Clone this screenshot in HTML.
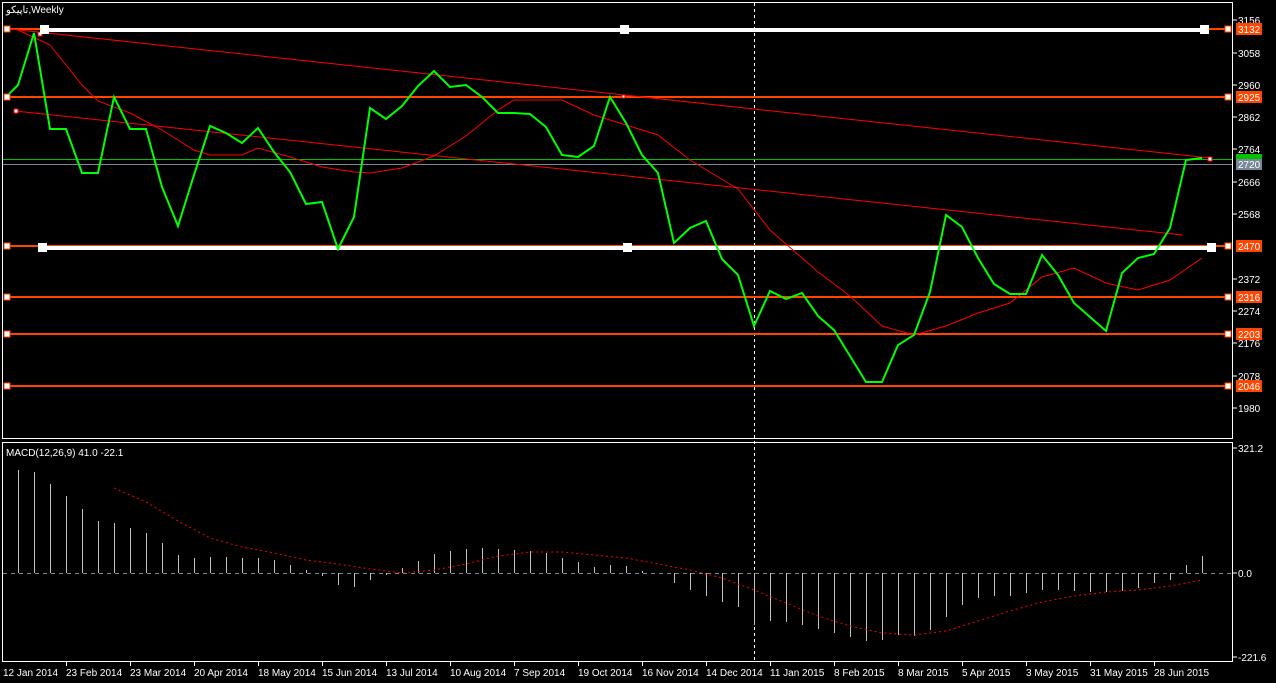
<!DOCTYPE html>
<html><head><meta charset="utf-8"><style>
html,body{margin:0;padding:0;background:#000;width:1276px;height:683px;overflow:hidden}
svg{display:block}
text{font-family:"Liberation Sans","Noto Sans CJK SC",sans-serif;font-size:10px;fill:#fff}
</style></head><body>
<svg width="1276" height="683" viewBox="0 0 1276 683" xmlns="http://www.w3.org/2000/svg" shape-rendering="crispEdges">
<rect width="1276" height="683" fill="#000"/>
<!-- frames -->
<rect x="2.5" y="2.5" width="1230" height="436" fill="none" stroke="#fff"/>
<rect x="2.5" y="442.5" width="1230" height="219" fill="none" stroke="#fff"/>
<line x1="754.5" y1="3" x2="754.5" y2="661" stroke="#fff" stroke-dasharray="3,3"/>
<!-- horizontal levels -->
<g stroke="#ff4500" stroke-width="2">
<line x1="6" y1="29" x2="1230" y2="29"/>
<line x1="6" y1="97" x2="1230" y2="97"/>
<line x1="6" y1="246" x2="1230" y2="246"/>
<line x1="6" y1="297" x2="1230" y2="297"/>
<line x1="6" y1="334" x2="1230" y2="334"/>
<line x1="6" y1="386" x2="1230" y2="386"/>
</g>
<line x1="3" y1="164.5" x2="1232" y2="164.5" stroke="#778899"/>
<line x1="3" y1="159.5" x2="1232" y2="159.5" stroke="#00c000"/>
<g stroke="#fff" stroke-width="4">
<line x1="44" y1="30" x2="1204" y2="30"/>
<line x1="42" y1="248" x2="1211" y2="248"/>
</g>
<!-- trendlines -->
<g stroke="#ff0000" stroke-width="1" shape-rendering="auto">
<line x1="10" y1="29" x2="1210" y2="158"/>
<line x1="15" y1="111" x2="1183" y2="235"/>
</g>
<!-- MA -->
<polyline fill="none" stroke="#ff0000" stroke-width="1" shape-rendering="auto" points="18,30 50,45 66,65 82,85 98,101 130,113 162,130 194,150 210,155 242,155 258,148 290,157 322,167 354,172 370,173 402,168 434,156 466,136 498,110 514,100 562,100 594,115 626,125 658,135 690,160 738,189 770,230 818,272 850,296 882,326 914,335 946,326 978,313 1010,303 1042,277 1074,268 1106,283 1138,290 1170,280 1202,258"/>
<!-- price -->
<polyline fill="none" stroke="#00ff00" stroke-width="2" shape-rendering="auto" points="6,97 18,85 34,33 50,129 66,129 82,173 98,173 114,97 130,129 146,129 162,187 178,226 194,175 210,126 226,133 242,143 258,128 274,152 290,172 306,204 322,202 338,249 354,217 370,108 386,119 402,106 418,86 434,71 450,87 466,85 482,97 498,113 514,113 530,114 546,127 562,155 578,157 594,146 610,97 626,123 642,155 658,173 674,243 690,228 706,221 722,259 738,275 754,326 770,291 786,299 802,293 818,316 834,330 850,356 866,382 882,382 898,345 914,335 930,292 946,215 962,227 978,258 994,284 1010,294 1026,294 1042,255 1058,275 1074,303 1090,317 1106,331 1122,273 1138,258 1154,254 1170,228 1186,160 1202,158"/>
<!-- handles -->
<g fill="#fff" stroke="#ff4500">
<rect x="4" y="26" width="6" height="6"/><rect x="1225" y="26" width="6" height="6"/>
<rect x="4" y="94" width="6" height="6"/><rect x="1225" y="94" width="6" height="6"/>
<rect x="4" y="243" width="6" height="6"/><rect x="1225" y="243" width="6" height="6"/>
<rect x="4" y="294" width="6" height="6"/><rect x="1225" y="294" width="6" height="6"/>
<rect x="4" y="331" width="6" height="6"/><rect x="1225" y="331" width="6" height="6"/>
<rect x="4" y="383" width="6" height="6"/><rect x="1225" y="383" width="6" height="6"/>
</g>
<g fill="#fff" stroke="#ff0000">
<rect x="38" y="32" width="4" height="4"/><rect x="1208" y="157" width="4" height="4"/>
<rect x="14" y="109" width="4" height="4"/><rect x="622" y="95" width="3" height="3"/>
</g>
<g fill="#fff">
<rect x="40" y="25" width="9" height="9"/><rect x="620" y="25" width="9" height="9"/><rect x="1200" y="25" width="9" height="9"/>
<rect x="38" y="243" width="9" height="9"/><rect x="623" y="243" width="9" height="9"/><rect x="1207" y="243" width="9" height="9"/>
</g>
<text x="6" y="13">تاپیکو,Weekly</text>
<!-- price axis -->
<g stroke="#fff"><line x1="1233" y1="20" x2="1237" y2="20"/><line x1="1233" y1="53" x2="1237" y2="53"/><line x1="1233" y1="85" x2="1237" y2="85"/><line x1="1233" y1="117" x2="1237" y2="117"/><line x1="1233" y1="149" x2="1237" y2="149"/><line x1="1233" y1="182" x2="1237" y2="182"/><line x1="1233" y1="214" x2="1237" y2="214"/><line x1="1233" y1="279" x2="1237" y2="279"/><line x1="1233" y1="311" x2="1237" y2="311"/><line x1="1233" y1="343" x2="1237" y2="343"/><line x1="1233" y1="376" x2="1237" y2="376"/><line x1="1233" y1="408" x2="1237" y2="408"/><line x1="1233" y1="448" x2="1237" y2="448"/><line x1="1233" y1="573" x2="1237" y2="573"/><line x1="1233" y1="657" x2="1237" y2="657"/></g>
<g>
<text x="1238" y="24">3156</text><text x="1238" y="57">3058</text><text x="1238" y="89">2960</text><text x="1238" y="121">2862</text><text x="1238" y="153">2764</text><text x="1238" y="186">2666</text><text x="1238" y="218">2568</text><text x="1238" y="283">2372</text><text x="1238" y="315">2274</text><text x="1238" y="347">2176</text><text x="1238" y="380">2078</text><text x="1238" y="412">1980</text>
<text x="1238" y="452">321.2</text><text x="1238" y="577">0.0</text><text x="1238" y="661">-221.6</text>
</g>
<g>
<rect x="1236" y="23" width="26" height="12" fill="#ff4500"/><text x="1238" y="33">3132</text>
<rect x="1236" y="91" width="26" height="12" fill="#ff4500"/><text x="1238" y="101">2925</text>
<rect x="1236" y="154" width="26" height="6" fill="#00c000"/>
<rect x="1236" y="159" width="26" height="11" fill="#778899"/><text x="1238" y="168">2720</text>
<rect x="1236" y="240" width="26" height="12" fill="#ff4500"/><text x="1238" y="250">2470</text>
<rect x="1236" y="291" width="26" height="12" fill="#ff4500"/><text x="1238" y="301">2316</text>
<rect x="1236" y="328" width="26" height="12" fill="#ff4500"/><text x="1238" y="338">2203</text>
<rect x="1236" y="380" width="26" height="12" fill="#ff4500"/><text x="1238" y="390">2046</text>
</g>
<!-- MACD -->
<text x="6" y="456">MACD(12,26,9) 41.0 -22.1</text>
<line x1="3" y1="573.5" x2="1232" y2="573.5" stroke="#778899" stroke-dasharray="4,4"/>
<path stroke="#c0c0c0" fill="none" d="M18.5 573V470M34.5 573V472M50.5 573V484M66.5 573V496M82.5 573V509M98.5 573V521M114.5 573V523M130.5 573V528M146.5 573V533M162.5 573V543M178.5 573V555M194.5 573V558M210.5 573V557M226.5 573V557M242.5 573V558M258.5 573V558M274.5 573V560M290.5 573V565M306.5 573V570M322.5 573V576M338.5 573V585M354.5 573V587M370.5 573V580M386.5 573V575M402.5 573V568M418.5 573V561M434.5 573V554M450.5 573V551M466.5 573V549M482.5 573V548M498.5 573V549M514.5 573V550M530.5 573V551M546.5 573V553M562.5 573V558M578.5 573V562M594.5 573V567M610.5 573V565M626.5 573V566M642.5 573V571M674.5 573V583M690.5 573V590M706.5 573V596M722.5 573V602M738.5 573V607M754.5 573V625M770.5 573V621M786.5 573V622M802.5 573V625M818.5 573V629M834.5 573V633M850.5 573V637M866.5 573V641M882.5 573V640M898.5 573V635M914.5 573V636M930.5 573V630M946.5 573V617M962.5 573V605M978.5 573V598M994.5 573V596M1010.5 573V596M1026.5 573V593M1042.5 573V590M1058.5 573V590M1074.5 573V591M1090.5 573V592M1106.5 573V592M1122.5 573V591M1138.5 573V588M1154.5 573V583M1170.5 573V580M1186.5 573V565M1202.5 573V556"/>
<polyline fill="none" stroke="#ff0000" stroke-dasharray="2,3" shape-rendering="auto" points="114,488 146,502 178,521 210,538 242,547 274,553 306,560 338,564 370,569 402,573 434,570 466,564 498,556 530,552 562,552 594,555 626,558 658,564 690,570 722,578 754,590 786,603 818,616 850,626 882,633 914,635 946,631 978,621 1010,611 1042,602 1074,596 1106,592 1138,590 1170,586 1202,580"/>
<!-- time axis -->
<g stroke="#fff"><line x1="66.5" y1="662" x2="66.5" y2="666"/><line x1="130.5" y1="662" x2="130.5" y2="666"/><line x1="194.5" y1="662" x2="194.5" y2="666"/><line x1="258.5" y1="662" x2="258.5" y2="666"/><line x1="322.5" y1="662" x2="322.5" y2="666"/><line x1="386.5" y1="662" x2="386.5" y2="666"/><line x1="450.5" y1="662" x2="450.5" y2="666"/><line x1="514.5" y1="662" x2="514.5" y2="666"/><line x1="578.5" y1="662" x2="578.5" y2="666"/><line x1="642.5" y1="662" x2="642.5" y2="666"/><line x1="706.5" y1="662" x2="706.5" y2="666"/><line x1="770.5" y1="662" x2="770.5" y2="666"/><line x1="834.5" y1="662" x2="834.5" y2="666"/><line x1="898.5" y1="662" x2="898.5" y2="666"/><line x1="962.5" y1="662" x2="962.5" y2="666"/><line x1="1026.5" y1="662" x2="1026.5" y2="666"/><line x1="1090.5" y1="662" x2="1090.5" y2="666"/><line x1="1154.5" y1="662" x2="1154.5" y2="666"/></g>
<g>
<text x="3" y="676">12 Jan 2014</text><text x="66" y="676">23 Feb 2014</text><text x="130" y="676">23 Mar 2014</text><text x="194" y="676">20 Apr 2014</text><text x="258" y="676">18 May 2014</text><text x="322" y="676">15 Jun 2014</text><text x="386" y="676">13 Jul 2014</text><text x="450" y="676">10 Aug 2014</text><text x="514" y="676">7 Sep 2014</text><text x="578" y="676">19 Oct 2014</text><text x="642" y="676">16 Nov 2014</text><text x="706" y="676">14 Dec 2014</text><text x="770" y="676">11 Jan 2015</text><text x="834" y="676">8 Feb 2015</text><text x="898" y="676">8 Mar 2015</text><text x="962" y="676">5 Apr 2015</text><text x="1026" y="676">3 May 2015</text><text x="1090" y="676">31 May 2015</text><text x="1154" y="676">28 Jun 2015</text>
</g>
</svg>
</body></html>
